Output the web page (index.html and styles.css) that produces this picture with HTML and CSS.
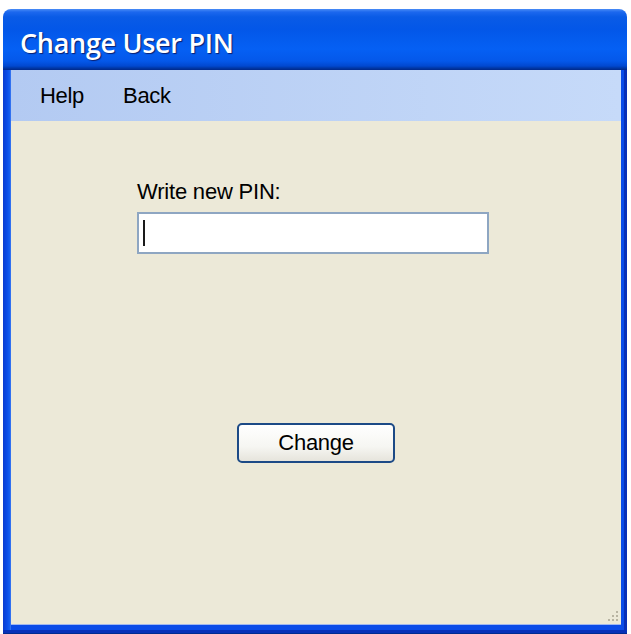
FILE: index.html
```html
<!DOCTYPE html>
<html>
<head>
<meta charset="utf-8">
<title>Change User PIN</title>
<link rel="stylesheet" href="styles.css">
</head>
<body>
<div class="window">
  <div class="titlebar"><span class="title">Change User PIN</span></div>
  <div class="frame">
    <div class="menubar">
      <span class="menu-item">Help</span>
      <span class="menu-item">Back</span>
    </div>
    <div class="content">
      <div class="field">
        <label class="label">Write new PIN:</label>
        <div class="input"><span class="caret"></span></div>
      </div>
      <div class="actions">
        <button class="btn">Change</button>
      </div>
      <div class="grip">
        <svg width="12" height="12" viewBox="0 0 12 12">
          <g fill="#b8b4a2">
            <rect x="9" y="1" width="2" height="2"/>
            <rect x="5" y="5" width="2" height="2"/>
            <rect x="9" y="5" width="2" height="2"/>
            <rect x="1" y="9" width="2" height="2"/>
            <rect x="5" y="9" width="2" height="2"/>
            <rect x="9" y="9" width="2" height="2"/>
          </g>
        </svg>
      </div>
    </div>
  </div>
</div>
</body>
</html>
```

FILE: styles.css
```css
html, body {
  margin: 0;
  padding: 0;
  background: #ffffff;
}
body {
  width: 631px;
  height: 634px;
  overflow: hidden;
}
.window {
  margin: 9px 0 0 3px;
  width: 624px;
  height: 625px;
  display: flex;
  flex-direction: column;
}
.titlebar {
  height: 61px;
  flex: none;
  box-sizing: border-box;
  border-radius: 8px 8px 0 0;
  background: linear-gradient(to bottom,
    #4a8cf6 0px, #1c68ee 3px, #0a5be6 8px, #0357e8 20px,
    #0560f4 40px, #0458ea 52px, #0148d0 57px, #0038a8 59px, #00288a 61px);
  display: flex;
  align-items: center;
  padding: 6px 0 0 17px;
}
.title {
  font-family: "Open Sans", "DejaVu Sans", sans-serif;
  font-weight: 600;
  font-size: 27px;
  letter-spacing: -0.3px;
  color: #ffffff;
  text-shadow: 1px 1px 1px #0a1e6e;
}
.frame {
  flex: 1;
  display: flex;
  flex-direction: column;
  background: linear-gradient(to right, #0a3cd0 0px, #0a4ce8 4px, #1660f0 7px, #4a80f0 8px, #0a4ce8 8px);
  padding: 0 6px 8px 8px;
  box-shadow: inset -3px -3px 0 #0830b8;
  border-bottom: 1px solid #002a90;
}
.menubar {
  height: 51px;
  flex: none;
  background: linear-gradient(to right, #b3caf2, #c6daf9);
  display: flex;
  align-items: center;
  gap: 39px;
  padding: 0 0 0 29px;
  font-family: "Liberation Sans", Arial, sans-serif;
  font-size: 22px;
  color: #000000;
}
.menu-item {
  letter-spacing: -0.3px;
}
.content {
  flex: 1;
  background: #ece9d8;
  position: relative;
  display: flex;
  flex-direction: column;
  align-items: flex-start;
  padding: 0 0 0 126px;
  border-bottom: 1px solid #a0b8f0;
}
.field {
  display: flex;
  flex-direction: column;
  margin-top: 58px;
}
.label {
  font-family: "Liberation Sans", Arial, sans-serif;
  font-size: 22px;
  color: #000000;
  letter-spacing: -0.2px;
  line-height: 26px;
  margin-bottom: 7px;
}
.input {
  width: 352px;
  height: 42px;
  box-sizing: border-box;
  background: #ffffff;
  border: 2px solid #8ea6c2;
  display: flex;
  align-items: center;
  padding-left: 4px;
}
.caret {
  width: 2px;
  height: 26px;
  background: #1a1a1a;
}
.actions {
  width: 352px;
  display: flex;
  justify-content: center;
  margin-top: 169px;
}
.btn {
  width: 158px;
  height: 40px;
  margin-left: 6px;
  border: 2px solid #1c4a86;
  border-radius: 5px;
  background: linear-gradient(to bottom, #ffffff 0%, #f6f6f2 60%, #e6e4dc 100%);
  font-family: "Liberation Sans", Arial, sans-serif;
  font-size: 22px;
  color: #000000;
  padding: 0;
  letter-spacing: -0.3px;
}
.grip {
  position: absolute;
  right: 2px;
  bottom: 2px;
  width: 12px;
  height: 12px;
  display: flex;
}
```
